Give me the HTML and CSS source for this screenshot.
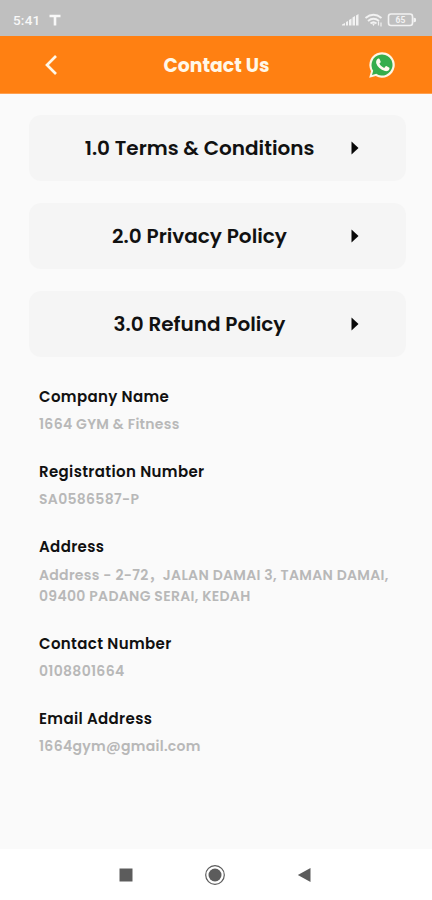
FILE: index.html
```html
<!DOCTYPE html>
<html lang="en">
<head>
<meta charset="utf-8">
<title>Contact Us</title>
<link rel="stylesheet" href="styles.css">
</head>
<body>
<div class="status">
  <span class="time">5:41</span>
  <svg class="tee" width="12" height="12" viewBox="0 0 12 12"><path d="M.5 2H11.500M6 2V11.500" fill="none" stroke="#f8f8f8" stroke-width="2.600"/></svg>
  <svg class="signals" width="76" height="16" viewBox="0 0 76 16">
    <g fill="#f2f2f2"><path d="M1 13.500v-1l3-1.500v2.500zM5 13.500V10l2-1v4.500zM8 13.500V8l2.500-1.500v7zM11.500 13.500V5.500L14 4v9.500zM15 13.500V3.500L17.500 2v11.500z"/></g>
    <g fill="none" stroke="#f2f2f2" stroke-width="1.900"><path d="M24.500 6Q32.500 -.500 40.500 6M27 9Q32.500 4.500 38 9M29.500 11.500Q32.500 9 35.500 11.500"/><path d="M37.500 9.500v4M40 10.500v4" stroke-width="1.200"/><rect x="47.500" y="2" width="24" height="11.500" rx="2.500" stroke-width="1.600"/></g>
    <path d="M31 11.500h3L32.500 14zM72.500 5.500l2.500 1v3L72.500 10.500z" fill="#f2f2f2"/>
    <text x="59.500" y="11" text-anchor="middle" class="level">65</text>
  </svg>
</div>
<header class="bar">
  <svg class="back" width="14" height="22" viewBox="0 0 14 22"><path d="M12 2L3 11L12 20" fill="none" stroke="#fff7e8" stroke-width="2.700"/></svg>
  <h1>Contact Us</h1>
  <svg class="whatsapp" width="28" height="28" viewBox="0 0 28 28"><path d="M1.200 26.700L3 20.200A12.700 12.700 0 1 1 7.800 25z" fill="#fff5e4"/><path d="M4 23.900L5.200 19.700A10.500 10.500 0 1 1 8.300 22.800z" fill="#35ad4b"/><path d="M10.200 7.500c.7-.3 1.300 0 1.500.7l.9 2.200c.2.600-.1 1-1.200 2.200 1 2 2.500 3.400 4.800 4.300l1.300-1.500c.4-.4.700-.4 1.200-.2l2.300 1.200c.6.300.6.700.4 1.500-.5 1.700-2.600 2.600-4.400 2.100-4.600-1.200-7.400-4-8.700-7.400-.7-2 .4-4.500 1.900-5.100z" fill="#fff9ef"/></svg>
</header>
<main>
  <nav>
    <a class="card"><span>1.0 Terms &amp; Conditions</span><svg width="8" height="14" viewBox="0 0 8 14"><path d="M.5 .5L7.500 7L.5 13.500z"/></svg></a>
    <a class="card"><span>2.0 Privacy Policy</span><svg width="8" height="14" viewBox="0 0 8 14"><path d="M.5 .5L7.500 7L.5 13.500z"/></svg></a>
    <a class="card"><span>3.0 Refund Policy</span><svg width="8" height="14" viewBox="0 0 8 14"><path d="M.5 .5L7.500 7L.5 13.500z"/></svg></a>
  </nav>
  <dl>
    <div><dt>Company Name</dt><dd>1664 GYM &amp; Fitness</dd></div>
    <div><dt>Registration Number</dt><dd>SA0586587-P</dd></div>
    <div><dt>Address</dt><dd class="address">Address - 2-72，JALAN DAMAI 3, TAMAN DAMAI,<br>09400 PADANG SERAI, KEDAH</dd></div>
    <div><dt>Contact Number</dt><dd>0108801664</dd></div>
    <div><dt>Email Address</dt><dd>1664gym@gmail.com</dd></div>
  </dl>
</main>
<footer>
  <svg width="14" height="14" viewBox="0 0 14 14"><path d="M.5 .5h13v13H.5z"/></svg>
  <svg width="22" height="22" viewBox="0 0 22 22"><circle cx="11" cy="11" r="9.300" fill="none" stroke="#5c5c5c" stroke-width="1.200"/><circle cx="11" cy="11" r="6.500"/></svg>
  <svg width="14" height="16" viewBox="0 0 14 16"><path d="M.8 8L13.500 1v14z"/></svg>
</footer>
</body>
</html>
```
FILE: styles.css
```css
* { box-sizing: border-box; }
body { margin: 0; width: 432px; height: 900px; display: flex; flex-direction: column; background: #fafafa; font-family: Poppins, Inter, "Noto Sans CJK SC", sans-serif; color: #111; overflow: hidden; }
svg { display: block; flex: none; }
.status { height: 36px; background: #bfbfbf; display: flex; align-items: center; padding: 3px 15px 0 13px; color: #f8f8f8; }
.time { font: 500 13.5px/16px Roboto, sans-serif; width: 36px; letter-spacing: .2px; }
.signals { margin-left: auto; }
.level { font: 700 8.5px Roboto, sans-serif; fill: #f2f2f2; }
.bar { height: 58px; background: #ff8012; border-bottom: 1px solid #ffa050; display: grid; grid-template-columns: 60px 1fr 60px; align-items: center; color: #fff7e8; padding: 0 24px 0 21px; }
.back { justify-self: center; }
.whatsapp { justify-self: end; margin-right: 12px; }
h1 { margin: 0; padding: 2px 0 0 4px; font-size: 18.8px; line-height: 26px; font-weight: 700; text-align: center; white-space: nowrap; }
main { flex: 1; padding: 21px 26px 0 29px; }
nav { display: flex; flex-direction: column; gap: 22px; }
.card { height: 66px; border-radius: 12px; background: #f5f5f5; display: grid; grid-template-columns: 1fr 8px; align-items: center; padding: 0 47px 0 19px; font-size: 20px; font-weight: 600; text-align: center; white-space: nowrap; }
.card svg { fill: #080808; }
dl { margin: 28px 0 0; padding-left: 10px; }
dl div { margin-bottom: 25px; }
dt { padding-top: 1px; font-size: 15px; line-height: 22px; font-weight: 600; letter-spacing: .36px; }
dd { margin: 6px 0 0; font-size: 14px; line-height: 21px; font-weight: 600; letter-spacing: .3px; color: #b8b8b8; white-space: nowrap; }
dd.address { margin-top: 7px; }
footer { height: 51px; background: #fff; display: flex; align-items: center; justify-content: space-between; padding: 0 121px 0 119px; fill: #5c5c5c; }
```
